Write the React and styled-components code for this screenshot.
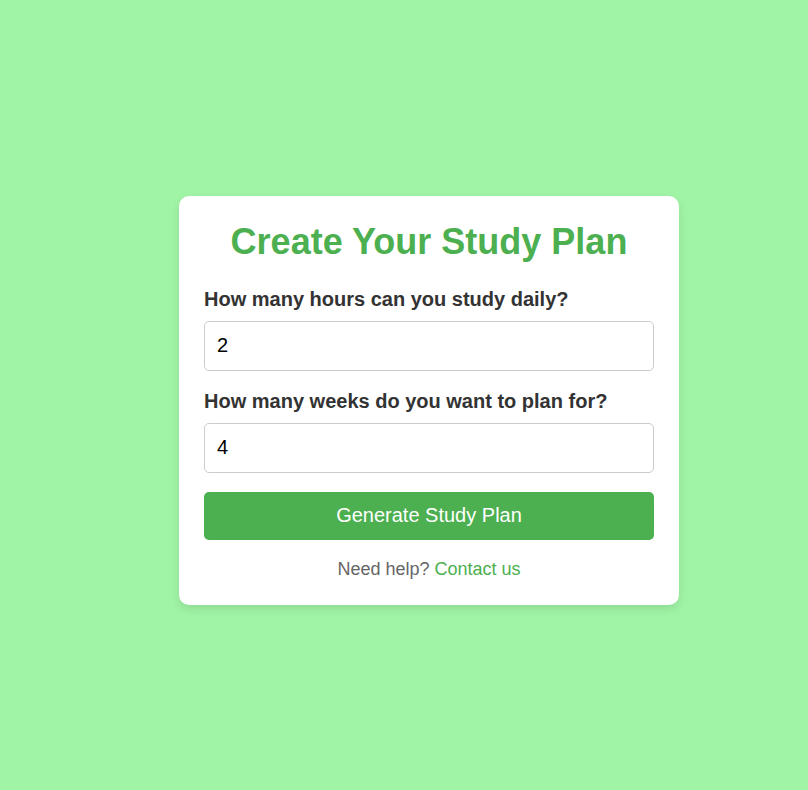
import React, { useState } from "react";
import styled, { createGlobalStyle } from "styled-components";

const GlobalStyle = createGlobalStyle`
  * { box-sizing: border-box; }
  body {
    margin: 0;
    background: #a0f4a6;
    font-family: "Liberation Sans", Arial, sans-serif;
  }
`;

const Page = styled.div`
  min-height: 790px;
  display: flex;
  justify-content: center;
  align-items: center;
  padding: 10px 0 0 50px;
`;

const Card = styled.form`
  width: 500px;
  background: #fff;
  border-radius: 10px;
  padding: 25px;
  box-shadow: 0 4px 10px rgba(0, 0, 0, 0.1);
`;

const Title = styled.h1`
  margin: 0 0 25px;
  text-align: center;
  color: #4caf50;
  font-size: 36px;
  font-weight: 700;
`;

const Label = styled.label`
  display: block;
  margin-bottom: 10px;
  color: #333;
  font-size: 20px;
  font-weight: 700;
`;

const Input = styled.input`
  display: block;
  width: 100%;
  height: 50px;
  padding: 0 12px;
  margin-bottom: 19px;
  border: 1px solid #ccc;
  border-radius: 5px;
  font-family: "Liberation Sans", Arial, sans-serif;
  font-size: 20px;
  color: #000;
  outline: none;
`;

const Button = styled.button`
  display: block;
  width: 100%;
  height: 48px;
  margin-top: 2px;
  border: none;
  border-radius: 5px;
  background: #4caf50;
  color: #fff;
  font-family: "Liberation Sans", Arial, sans-serif;
  font-size: 20px;
  cursor: pointer;
`;

const Help = styled.p`
  margin: 19px 0 0;
  text-align: center;
  color: #666;
  font-size: 18px;
`;

const Link = styled.a`
  color: #4caf50;
  text-decoration: none;
`;

export default function App() {
  const [hours, setHours] = useState("2");
  const [weeks, setWeeks] = useState("4");

  return (
    <>
      <GlobalStyle />
      <Page>
        <Card onSubmit={(e) => e.preventDefault()}>
          <Title>Create Your Study Plan</Title>
          <Label htmlFor="hours">How many hours can you study daily?</Label>
          <Input id="hours" type="text" value={hours} onChange={(e) => setHours(e.target.value)} />
          <Label htmlFor="weeks">How many weeks do you want to plan for?</Label>
          <Input id="weeks" type="text" value={weeks} onChange={(e) => setWeeks(e.target.value)} />
          <Button type="submit">Generate Study Plan</Button>
          <Help>
            Need help? <Link href="#">Contact us</Link>
          </Help>
        </Card>
      </Page>
    </>
  );
}
